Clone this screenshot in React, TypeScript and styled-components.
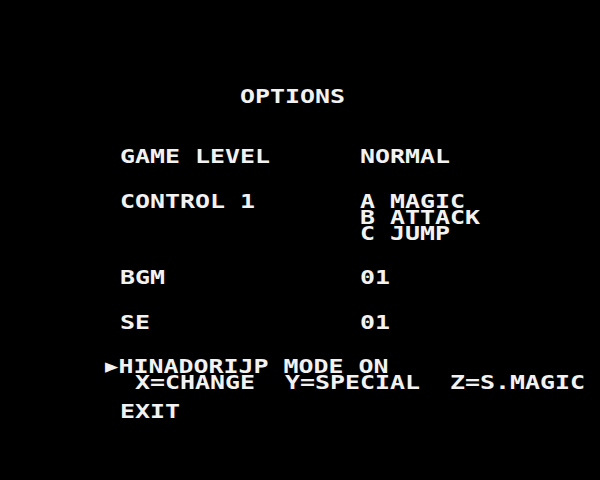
import styled, { createGlobalStyle } from "styled-components"

// the menu text is laid out on a 40-column character grid, each cell 15px wide
const CELL = 15
const FONT_SIZE = 19
const ADVANCE = FONT_SIZE * 0.602
const STRETCH = CELL / ADVANCE

const GlobalStyle = createGlobalStyle`
    html, body {
        margin: 0;
        padding: 0;
        background: #000;
    }
`

const Screen = styled.div`
    width: 600px;
    height: 480px;
    background: #000;
    overflow: hidden;
`

const Panel = styled.div`
    width: ${600 / STRETCH}px;
    padding-top: 88px;
    transform: scaleX(${STRETCH});
    transform-origin: left top;
    font-family: "DejaVu Sans Mono", "Liberation Mono", monospace;
    font-weight: bold;
    font-size: ${FONT_SIZE}px;
    line-height: 16px;
    color: #f2f2f2;
    white-space: pre;
`

const Title = styled.div`
    padding-left: 16ch;
    margin-bottom: 44px;
`

type StackProps = {
    gap: number
}

const Stack = styled.div<StackProps>`
    display: flex;
    flex-direction: column;
    gap: ${({ gap }) => gap}px;
`

type RowProps = {
    indent: number
}

const Row = styled.div<RowProps>`
    display: grid;
    grid-template-columns: 16ch 1fr;
    padding-left: ${({ indent }) => indent}ch;
`

const Lines = styled.div<RowProps>`
    display: flex;
    flex-direction: column;
    padding-left: ${({ indent }) => indent}ch;
`

const Cursor = styled.span`
    display: inline-block;
    width: 1ch;
    font-size: 17px;
    vertical-align: 1px;
`

const options: { label: string; value: string[] }[] = [
    { label: "GAME LEVEL", value: ["NORMAL"] },
    { label: "CONTROL 1", value: ["A MAGIC", "B ATTACK", "C JUMP"] },
    { label: "BGM", value: ["01"] },
    { label: "SE", value: ["01"] },
]

export default function App() {
    return (
        <>
            <GlobalStyle />
            <Screen>
                <Panel>
                    <Title>OPTIONS</Title>
                    <Stack gap={28.5}>
                        {options.map((o) => (
                            <Row indent={8} key={o.label}>
                                <div>{o.label}</div>
                                <Lines indent={0}>
                                    {o.value.map((v) => (
                                        <div key={v}>{v}</div>
                                    ))}
                                </Lines>
                            </Row>
                        ))}
                        <Stack gap={13}>
                            <Lines indent={7}>
                                <div>
                                    <Cursor>▶</Cursor>HINADORIJP MODE ON
                                </div>
                                <div>{"  X=CHANGE  Y=SPECIAL  Z=S.MAGIC"}</div>
                            </Lines>
                            <Row indent={8}>
                                <div>EXIT</div>
                            </Row>
                        </Stack>
                    </Stack>
                </Panel>
            </Screen>
        </>
    )
}
